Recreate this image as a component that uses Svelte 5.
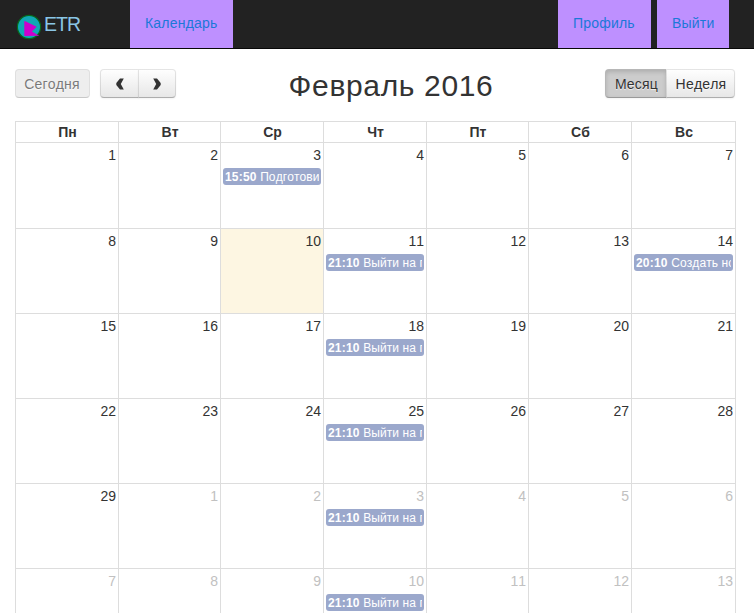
<script>
  const weekdays = ['Пн', 'Вт', 'Ср', 'Чт', 'Пт', 'Сб', 'Вс'];
  const run = { time: '21:10', title: 'Выйти на пробежку' };
  const events = {
    2: { time: '15:50', title: 'Подготовиться' },
    10: run,
    13: { time: '20:10', title: 'Создать новый' },
    17: run,
    24: run,
    31: run,
    38: run
  };
  const weeks = Array.from({ length: 6 }, (_, w) =>
    Array.from({ length: 7 }, (_, d) => {
      const i = w * 7 + d;
      return { day: i < 29 ? i + 1 : i - 28, other: i >= 29, today: i === 9, event: events[i] };
    })
  );
</script>

<div class="page">
  <nav>
    <a class="brand" href="#home">
      <svg width="26" height="26" viewBox="0 0 26 26">
        <circle cx="13" cy="13" r="11.6" fill="#10a8b5" stroke="#066a1c" stroke-width="1.2" />
        <path d="M8.3 6.8 L20.7 12.8 L15.9 17.4 L23.3 21.7 L8.3 22 Z" fill="#cc00cc" />
      </svg>
      <span>ETR</span>
    </a>
    <a class="link" href="#calendar">Календарь</a>
    <div class="account">
      <a class="link profile" href="#profile">Профиль</a>
      <a class="link" href="#logout">Выйти</a>
    </div>
  </nav>

  <main>
    <header>
      <div class="left">
        <button class="today-btn" disabled>Сегодня</button>
        <div class="group">
          <button class="arrow" aria-label="Назад">
            <svg width="8" height="12" viewBox="0 0 8 12"><path d="M4 .5H7.8L4.8 6L7.8 11.5H4L.3 7V5Z" fill="#333" /></svg>
          </button>
          <button class="arrow" aria-label="Вперёд">
            <svg width="8" height="12" viewBox="0 0 8 12"><path d="M4 .5H.2L3.2 6L.2 11.5H4L7.7 7V5Z" fill="#333" /></svg>
          </button>
        </div>
      </div>
      <h2>Февраль 2016</h2>
      <div class="group views">
        <button class="active">Месяц</button>
        <button>Неделя</button>
      </div>
    </header>

    <div class="calendar">
      <div class="row head">
        {#each weekdays as name}
          <div class="cell">{name}</div>
        {/each}
      </div>
      {#each weeks as week}
        <div class="row week">
          {#each week as c}
            <div class="cell" class:other={c.other} class:today={c.today}>
              <div class="num">{c.day}</div>
              {#if c.event}
                <div class="event"><div class="clip"><b>{c.event.time}</b> {c.event.title}</div></div>
              {/if}
            </div>
          {/each}
        </div>
      {/each}
    </div>
  </main>
</div>

<style>
  :global(body) { margin: 0; background: #fff; overflow: hidden; }
  .page {
    height: 613px;
    overflow: hidden;
    font-family: "Liberation Sans", Arial, sans-serif;
    font-size: 14px;
    font-kerning: none;
    line-height: 20px;
    color: #333;
  }
  nav {
    display: flex;
    box-sizing: border-box;
    height: 49px;
    padding: 0 25px 0 16px;
    background: #222;
    border-bottom: 1px solid #080808;
  }
  a { text-decoration: none; }
  .brand {
    display: flex;
    width: 114px;
    color: #8ac6e6;
  }
  .brand svg { margin-top: 14px; }
  .brand span { margin: 14px 0 0 2px; font-size: 19.5px; letter-spacing: -1px; }
  .link {
    box-sizing: border-box;
    width: 103px;
    padding: 13px 0 15px 15px;
    background: #be90ff;
    color: #1b78d8;
    letter-spacing: .2px;
  }
  .account { display: flex; gap: 6px; margin-left: auto; }
  .account .link { width: 72px; }
  .account .profile { width: 93px; }
  main { padding: 20px 19px 0 15px; }
  header {
    display: grid;
    grid-template-columns: 161px 1fr 130px;
    height: 52px;
  }
  .left { display: flex; gap: 10px; }
  .group { display: flex; }
  button {
    box-sizing: border-box;
    height: 29px;
    margin: 0;
    padding: 0;
    border: 1px solid;
    border-color: rgba(0, 0, 0, .1) rgba(0, 0, 0, .1) rgba(0, 0, 0, .25);
    border-radius: 4px;
    background: #f5f5f5 linear-gradient(#fff, #e6e6e6) border-box;
    box-shadow: inset 0 1px 0 rgba(255, 255, 255, .2), 0 1px 2px rgba(0, 0, 0, .05);
    color: #333;
    font: inherit;
    font-kerning: none;
    letter-spacing: .2px;
    text-shadow: 0 1px 1px rgba(255, 255, 255, .75);
    white-space: nowrap;
  }
  .today-btn {
    width: 75px;
    padding-right: 1px;
    background: #e6e6e6;
    box-shadow: none;
    opacity: .65;
  }
  .group button:first-child { border-radius: 4px 0 0 4px; }
  .group button:last-child { margin-left: -1px; border-radius: 0 4px 4px 0; }
  .arrow {
    display: flex;
    align-items: center;
    justify-content: center;
    width: 38px;
  }
  .arrow:first-child { width: 39px; }
  .views button { width: 69px; padding-left: 1px; }
  .views .active {
    width: 62px;
    background: #ccc;
    box-shadow: inset 0 2px 4px rgba(0, 0, 0, .15), 0 1px 2px rgba(0, 0, 0, .05);
  }
  h2 {
    margin: 0;
    padding-left: 1px;
    font-size: 30px;
    font-weight: normal;
    letter-spacing: .65px;
    line-height: 34px;
    text-align: center;
    white-space: nowrap;
  }
  .calendar { width: 721px; }
  .row {
    display: grid;
    grid-template-columns: 103px 102px 103px 103px 102px 103px 105px;
    height: 85px;
  }
  .cell {
    box-sizing: border-box;
    min-width: 0;
    border: solid #ddd;
    border-width: 1px 0 0 1px;
  }
  .cell:last-child { border-right-width: 1px; }
  .head { height: 21px; font-weight: bold; text-align: center; }
  .head .cell { padding-left: 1px; }
  .head + .week { height: 86px; }
  .num { padding: 2px 2px 0 0; text-align: right; }
  .other .num { color: #c1c1c1; }
  .today { background: #fdf6e2; }
  .event {
    box-sizing: border-box;
    height: 17px;
    margin: 3px 2px 0;
    padding: 0 2px;
    border-radius: 3px;
    background: #9ba8cc;
    color: #fff;
    font-size: 12px;
    letter-spacing: .1px;
    line-height: 18px;
  }
  .event b { letter-spacing: .2px; }
  .clip { height: 17px; overflow: hidden; white-space: nowrap; }
</style>
